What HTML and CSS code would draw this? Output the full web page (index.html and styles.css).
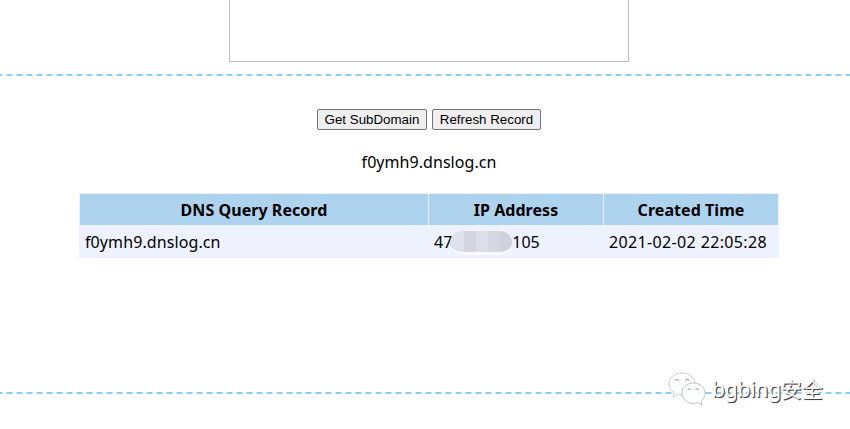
FILE: index.html
```html
<!DOCTYPE html>
<html lang="en">
<head>
<meta charset="utf-8">
<title>DNSLog</title>
<link rel="stylesheet" href="styles.css">
</head>
<body>
<header class="top"><div class="panel"></div></header>
<main class="content">
  <div class="actions"><button>Get SubDomain</button><button>Refresh Record</button></div>
  <div class="domain">f0ymh9.dnslog.cn</div>
  <table class="records">
    <colgroup><col class="c-name"><col class="c-ip"><col class="c-time"></colgroup>
    <thead><tr><th>DNS Query Record</th><th>IP Address</th><th>Created Time</th></tr></thead>
    <tbody><tr><td class="name">f0ymh9.dnslog.cn</td><td><div class="ip"><span>47</span><i class="mask"></i><span>105</span></div></td><td class="time">2021-02-02 22:05:28</td></tr></tbody>
  </table>
</main>
<footer class="bottom"></footer>
<div class="watermark">
  <svg width="38" height="36" viewBox="0 0 38 36">
    <g fill="#fff" fill-opacity=".9" stroke="#999" stroke-width=".6" stroke-linejoin="round">
      <path d="M14 1C6.500 1 1 5.800 1 12c0 3.800 2 6.800 5.200 9L5 25l5-2.600c1.600.5 3 .6 5 .6C22 23 27 18 27 12S21.500 1 14 1z" stroke-dasharray="2 .6"/>
      <path d="M25.500 11C19 11 14 15.500 14 21s5 10.500 11.500 10.500c1.500 0 3-.3 4.500-.8l4 2.300-1-3.700c2.500-2 4-4.800 4-8.300 0-5.500-5-10-11.500-10z"/>
    </g>
    <g fill="none" stroke="#888" stroke-width=".8"><path d="M7.500 9a1.700 1.700 0 0 1 3.400 0M17.500 9a1.700 1.700 0 0 1 3.400 0M20 18a1.400 1.400 0 0 1 2.800 0M28 18a1.400 1.400 0 0 1 2.800 0"/></g>
  </svg>
  <span class="brand">bgbing安全</span>
</div>
</body>
</html>
```
FILE: styles.css
```css
* { box-sizing: border-box; }
body {
  margin: 0;
  height: 429px;
  overflow: hidden;
  background: #fff;
  color: #000;
  font: 16px/22px "Noto Sans", "Noto Sans CJK SC", sans-serif;
}
.top, .bottom {
  background: repeating-linear-gradient(90deg, #87cefa 0 2px, #c3e6fc 2px 3px, #fff 3px 6px, #c3e6fc 6px 7px, #87cefa 7px 9.983px) left bottom / 100% 2px no-repeat;
}
.top { height: 76px; padding-left: 229px; }
.panel { width: 400px; height: 62px; border: 1px solid #bbb; border-top: 0; }
.content { height: 316px; padding: 33px 71px 0 79px; }
.actions { display: flex; justify-content: center; gap: 5px; }
button {
  width: 110px;
  height: 21px;
  padding: 0;
  border: 1px solid #767676;
  border-radius: 2px;
  background: #efefef;
  color: #000;
  font: 13.333px "Liberation Sans", sans-serif;
}
button + button { width: 109px; }
.domain { margin: 21px 0 20px; text-align: center; letter-spacing: .05px; }
.records {
  width: 700px;
  height: 65px;
  table-layout: fixed;
  border-spacing: 1px;
  background: #eef2ff;
}
.c-name { width: 348px; }
.c-ip, .c-time { width: 174px; }
th, td { padding: 0 5px; height: 31px; white-space: nowrap; }
th { background: #aed3ee; font-weight: 700; letter-spacing: .05px; }
td { text-align: left; }
.name { letter-spacing: .1px; }
.time { letter-spacing: .36px; }
.ip { display: flex; align-items: center; height: 24px; }
.mask {
  width: 62px;
  height: 24px;
  margin: 3px 0 0 -2px;
  border-radius: 12px;
  border-bottom: 3px solid #f8faff;
  background: linear-gradient(90deg, #dfe1ed 0 14px, #d3d5e0 14px 26px, #dcdeea 26px 38px, #d5d7e1 38px 50px, #cfd1dc 50px);
}
.bottom { height: 2px; }
.watermark { position: absolute; left: 668px; top: 372px; display: flex; }
.brand {
  margin: 3px 0 0 6px;
  color: #fff;
  font: 21px/28px "Noto Sans", "Noto Sans CJK SC", sans-serif;
  letter-spacing: -.2px;
  text-shadow: 1px 1px 0 #444, 1px 1px 1px #888;
  white-space: nowrap;
}
```
